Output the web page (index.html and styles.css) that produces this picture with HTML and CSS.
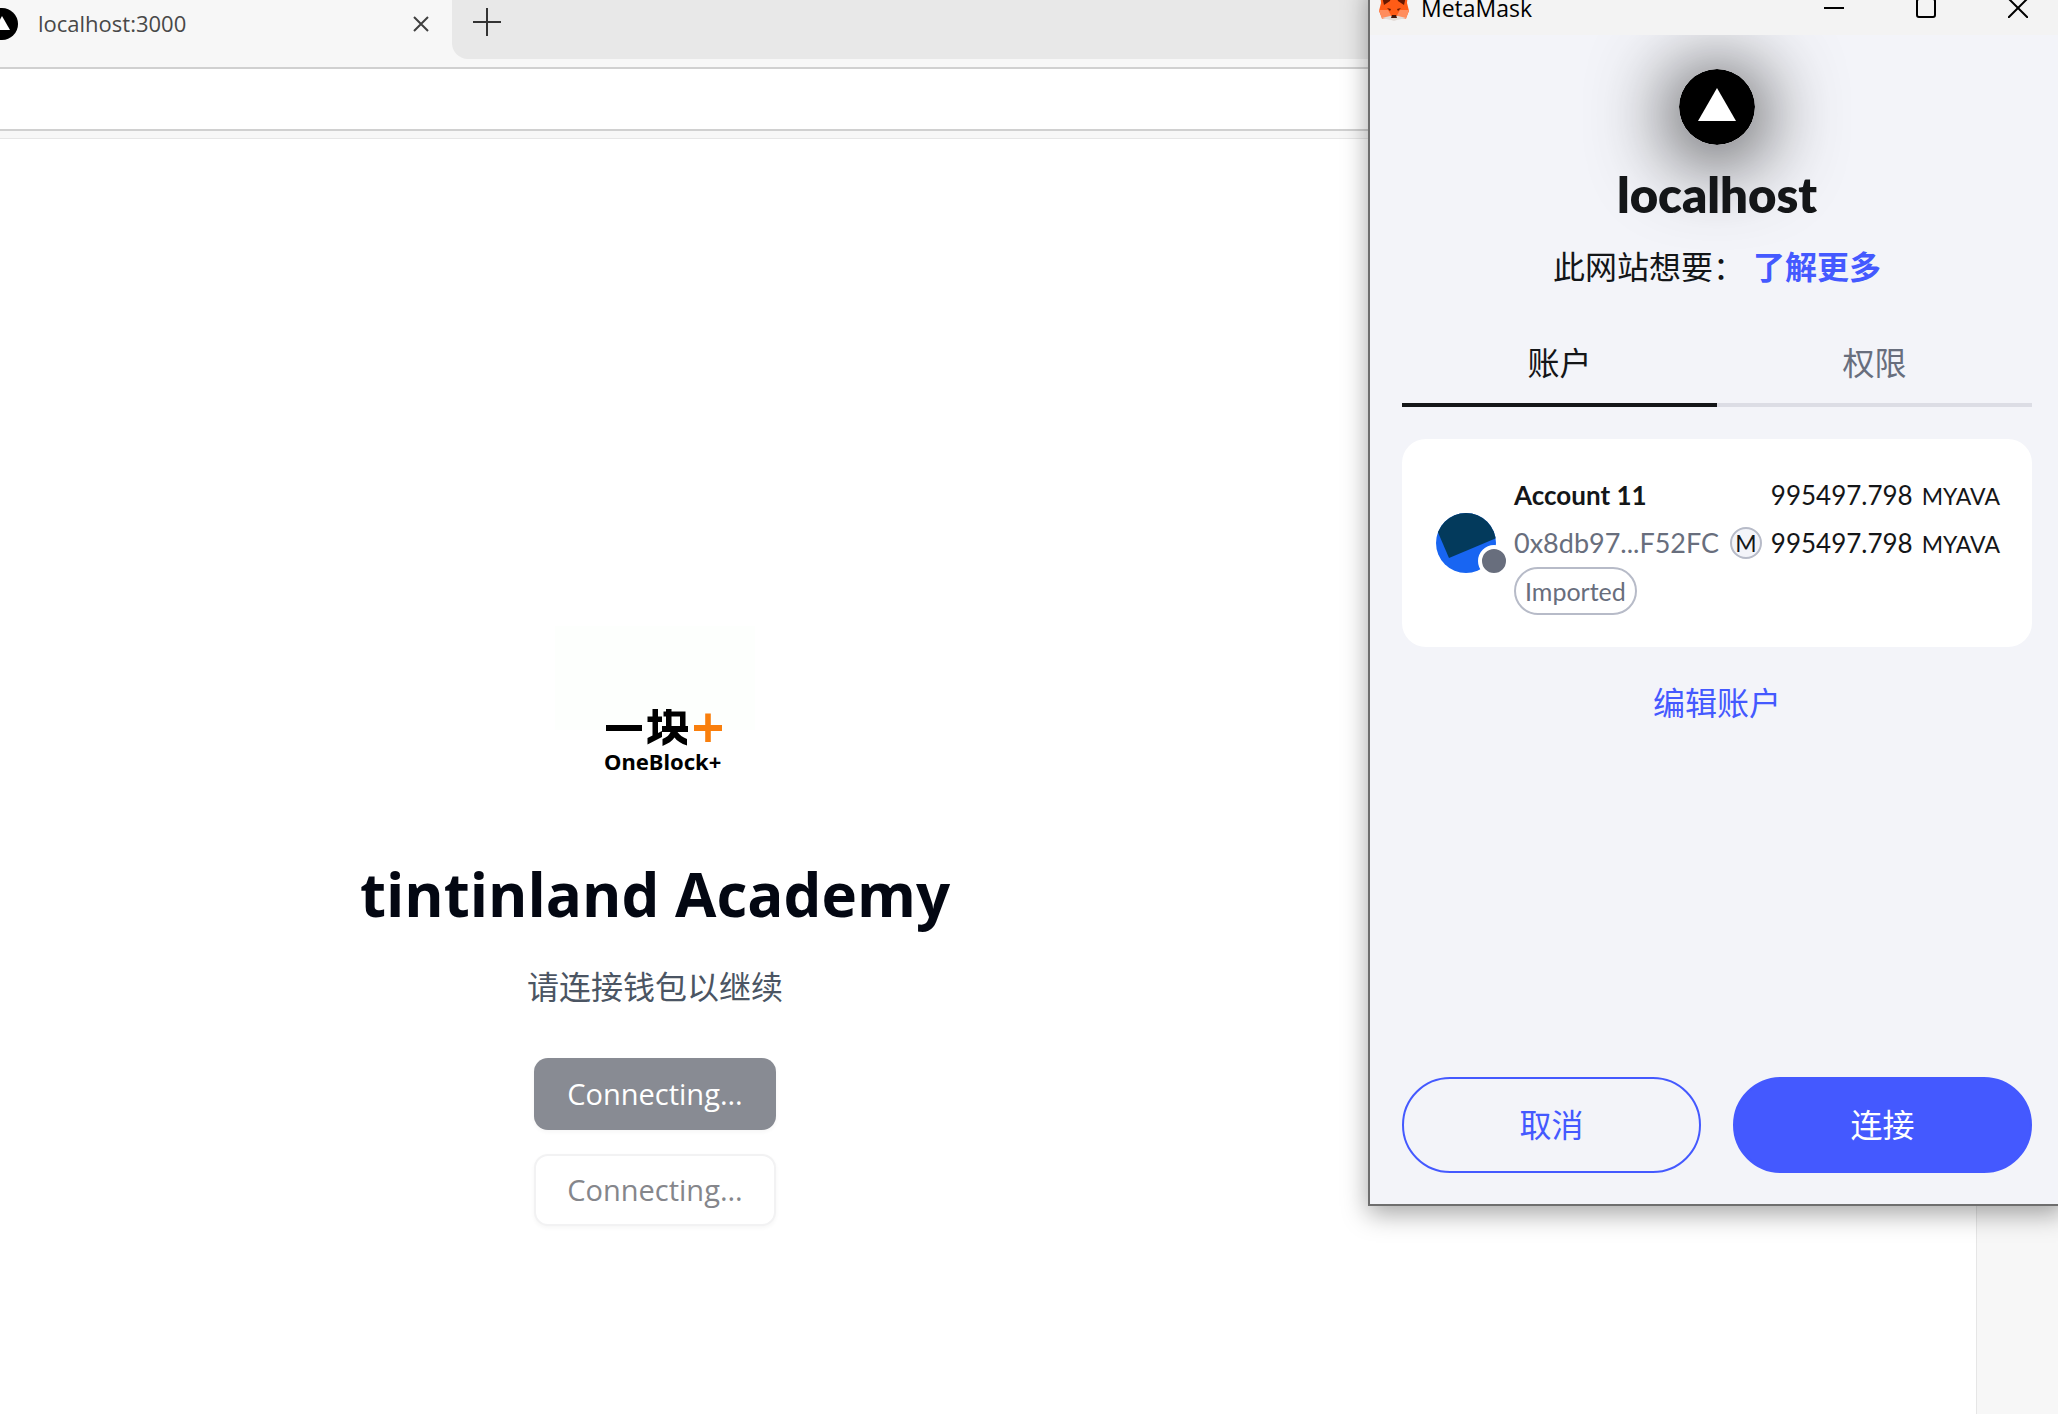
FILE: index.html
```html
<!DOCTYPE html>
<html lang="zh-CN">
<head>
<meta charset="utf-8">
<title>tintinland Academy</title>
<link rel="stylesheet" href="styles.css">
</head>
<body>
<div class="browser">
  <header class="tabstrip">
    <div class="tab">
      <svg class="tab-icon" viewBox="0 0 32 32" aria-hidden="true"><circle cx="16" cy="16" r="16"/><path d="M16 8l8 14H8z" fill="#fff"/></svg>
      <span class="tab-title">localhost:3000</span>
      <button class="icon-button" aria-label="Close tab"><svg width="16" height="16" viewBox="0 0 16 16"><path d="M1 1l14 14M15 1L1 15" stroke="#404040" stroke-width="2" fill="none"/></svg></button>
    </div>
    <div class="strip-rest">
      <button class="icon-button" aria-label="New tab"><svg width="28" height="28" viewBox="0 0 28 28"><path d="M14 0v28M0 14h28" stroke="#333" stroke-width="2" fill="none"/></svg></button>
    </div>
  </header>
  <div class="toolbar"></div>
  <div class="viewport">
    <main class="page">
      <div class="logo">
        <svg viewBox="0 0 200 200" role="img" aria-label="OneBlock+">
          <rect width="200" height="104" fill="#fdfffd"/>
          <path d="M51 99h36v6H51z"/>
          <path d="M97.500 83h5.500v7.500h4v5.500h-4v11l4-2v6l-14.500 7.500v-6.500l5-2.500V96h-5v-5.500h5z"/>
          <path d="M111 83h5.500v2.500h14V100h2.500v6h-10.500c2 3 5 5 9.500 7v6.500c-6-2-10-4.500-12.500-8-2.500 3.500-6 6-12 8.500V113c4.500-2 7-4 8-7H107v-6h4v-9.500h-2.500v-5H111zM116.500 90.500V100h8.500v-9.500z" fill-rule="evenodd"/>
          <path d="M139 99h11.200V87.500h5.600V99H167v6h-11.200v11h-5.600v-11H139z" fill="#f97f0d"/>
          <text x="49" y="144" class="logo-text">OneBlock+</text>
        </svg>
      </div>
      <h1 class="title">tintinland Academy</h1>
      <p class="subtitle">请连接钱包以继续</p>
      <div class="connectors">
        <button class="connect connect-solid" disabled>Connecting...</button>
        <button class="connect connect-outline" disabled>Connecting...</button>
      </div>
    </main>
    <aside class="sidebar"></aside>
  </div>
</div>

<section class="wallet" aria-label="MetaMask">
  <header class="titlebar">
    <svg class="fox" viewBox="0 0 30 30" aria-hidden="true">
      <path d="M1 1l10 6h8l10-6-1 11 2 8-3 7-8-1-4 3-4-3-8 1-3-7 2-8z" fill="#ff5c16"/>
      <path d="M2 1l3 13 6-4 1-3zM28 1l-3 13-6-4-1-3z" fill="#661800"/>
      <path d="M0 19h9l4 7-10 2zM30 19h-9l-4 7 10 2z" fill="#ff8d5d"/>
      <path d="M3 27l8-2h8l8 2-9 2-3 1-3-1z" fill="#e3dcd8"/>
      <path d="M13 24h4l1 3h-6z" fill="#42180c"/>
      <path d="M8 17l4 1-1 2zM22 17l-4 1 1 2z" fill="#661800"/>
    </svg>
    <span class="titlebar-name">MetaMask</span>
    <div class="window-controls">
      <button class="icon-button" aria-label="Minimize"><svg width="20" height="20" viewBox="0 0 20 20"><path d="M0 10h20" stroke="#000" stroke-width="2"/></svg></button>
      <button class="icon-button" aria-label="Maximize"><svg width="20" height="20" viewBox="0 0 20 20"><rect x="1" y="1" width="18" height="18" rx="2" fill="none" stroke="#000" stroke-width="2"/></svg></button>
      <button class="icon-button" aria-label="Close"><svg width="20" height="20" viewBox="0 0 20 20"><path d="M0 0l20 20M20 0L0 20" stroke="#000" stroke-width="2"/></svg></button>
    </div>
  </header>
  <div class="wallet-body">
    <svg class="site-icon" viewBox="0 0 76 76" aria-hidden="true"><circle cx="38" cy="38" r="38"/><path d="M38 19l19 33H19z" fill="#fff"/></svg>
    <h2 class="site-name">localhost</h2>
    <p class="site-ask">此网站想要：<a class="link strong" href="#more">了解更多</a></p>
    <div class="tabs" role="tablist">
      <button class="tabs-item active" role="tab" aria-selected="true">账户</button>
      <button class="tabs-item" role="tab" aria-selected="false">权限</button>
    </div>
    <div class="card">
      <div class="avatar">
        <svg viewBox="0 0 60 60" aria-hidden="true"><defs><clipPath id="round"><circle cx="30" cy="30" r="30"/></clipPath></defs><g clip-path="url(#round)"><path d="M0 0h60v60H0z" fill="#1865f2"/><path d="M-8 -4L13 45 70 21V-10z" fill="#033a5c"/></g></svg>
        <span class="avatar-badge"></span>
      </div>
      <div class="account">
        <span class="account-name">Account 11</span>
        <span class="account-address">0x8db97...F52FC</span>
        <span class="account-tag">Imported</span>
      </div>
      <div class="balances">
        <span class="balance">995497.798 <small>MYAVA</small></span>
        <span class="balance"><i class="token">M</i>995497.798 <small>MYAVA</small></span>
      </div>
    </div>
    <a class="link edit" href="#edit">编辑账户</a>
    <footer class="actions">
      <button class="action action-outline">取消</button>
      <button class="action action-solid">连接</button>
    </footer>
  </div>
</section>
</body>
</html>
```
FILE: styles.css
```css
* {
  box-sizing: border-box;
}

body {
  position: relative;
  margin: 0;
  min-height: 100vh;
  overflow: hidden;
  background: #fff;
  color: #141618;
  font-family: "Open Sans", "Noto Sans CJK SC", sans-serif;
}

button {
  font: inherit;
  color: inherit;
}

svg {
  display: block;
}

.icon-button {
  display: flex;
  padding: 0;
  border: 0;
  background: none;
}

/* Browser chrome */
.browser {
  display: flex;
  flex-direction: column;
  min-height: 100vh;
}

.tabstrip {
  display: flex;
  height: 67px;
  padding-bottom: 8px;
  background: #f7f7f7;
}

.tab {
  display: flex;
  align-items: center;
  width: 452px;
  padding: 0 23px 12px 0;
}

.tab-icon {
  width: 32px;
  height: 32px;
  margin-left: -14px;
}

.tab-title {
  flex: 1;
  margin-left: 20px;
  padding-bottom: 2px;
  color: #484848;
  font-size: 22px;
}

.strip-rest {
  display: flex;
  flex: 1;
  padding: 8px 21px;
  border-bottom-left-radius: 16px;
  background: #e8e8e8;
}

.toolbar {
  height: 64px;
  border: solid #d0d0d0;
  border-width: 2px 0;
  background: #fff;
}

.viewport {
  display: flex;
  flex: 1;
  padding-top: 7px;
  background: #f7f7f7;
}

.page {
  display: flex;
  flex: 1;
  flex-direction: column;
  align-items: center;
  padding: 487px 666px 0 0;
  border: solid #e6e6e6;
  border-width: 1px 1px 0 0;
  background: #fff;
}

.sidebar {
  width: 81px;
}

/* Landing page */
.logo {
  width: 200px;
  height: 200px;
}

.logo-text {
  font: 700 22px "Noto Sans", sans-serif;
}

.title {
  margin: 24px 0 0;
  color: #030712;
  font-size: 60px;
  font-weight: 700;
  line-height: 88px;
  white-space: nowrap;
}

.subtitle {
  margin: 25px 0 0;
  color: #4b5563;
  font-size: 32px;
  line-height: 48px;
}

.connectors {
  display: flex;
  flex-direction: column;
  gap: 24px;
  margin-top: 47px;
}

.connect {
  width: 242px;
  height: 72px;
  padding: 0 0 2px;
  border: 0;
  border-radius: 14px;
  box-shadow: 0 2px 4px rgba(0, 0, 0, 0.04);
  font-size: 29px;
}

.connect-solid {
  background: #888b93;
  color: #fff;
}

.connect-outline {
  border: 2px solid #f2f2f3;
  background: #fff;
  color: #85868b;
}

/* Wallet window */
.wallet {
  position: absolute;
  top: -19px;
  right: -6px;
  width: 696px;
  border: 2px solid #6e6e6e;
  box-shadow: 0 8px 24px rgba(0, 0, 0, 0.35);
  background: #f3f4f9;
}

.titlebar {
  display: flex;
  align-items: center;
  height: 52px;
  padding: 0 34px 2px 9px;
  background: #f3f3f3;
}

.fox {
  width: 30px;
  height: 30px;
  margin-bottom: 4px;
}

.titlebar-name {
  flex: 1;
  margin-left: 12px;
  color: #000;
  font-size: 23px;
  line-height: 28px;
}

.window-controls {
  display: flex;
  gap: 72px;
}

.wallet-body {
  display: flex;
  flex-direction: column;
  align-items: center;
  padding: 34px 30px 31px 32px;
  overflow: hidden;
  font-family: Lato, "Noto Sans CJK SC", sans-serif;
  font-size: 32px;
  line-height: 48px;
}

.site-icon {
  width: 76px;
  height: 76px;
  border-radius: 50%;
  box-shadow: 0 8px 80px 8px rgba(0, 0, 0, 0.8);
}

.site-name {
  position: relative;
  margin: 21px 0 0;
  font-size: 49px;
  font-weight: 800;
  line-height: 56px;
}

.site-ask {
  margin: 21px 0 0;
}

.link {
  color: #4459ff;
  text-decoration: none;
}

.strong {
  margin-left: 8px;
  font-weight: 700;
}

.tabs {
  display: flex;
  width: 100%;
  margin-top: 32px;
}

.tabs-item {
  flex: 1;
  height: 84px;
  padding: 0;
  border: 0;
  border-bottom: 4px solid #dcdde5;
  background: none;
  color: #686e7d;
}

.tabs-item.active {
  border-color: #141618;
  color: #141618;
}

.card {
  display: flex;
  align-items: center;
  width: 100%;
  height: 208px;
  margin-top: 32px;
  padding: 32px;
  border-radius: 24px;
  background: #fff;
  font-size: 26px;
}

.avatar {
  position: relative;
  flex: none;
  width: 60px;
  margin-left: 2px;
}

.avatar-badge {
  position: absolute;
  right: -14px;
  bottom: -4px;
  width: 32px;
  height: 32px;
  border: 4px solid #fff;
  border-radius: 50%;
  background: #686e7d;
}

.account {
  display: flex;
  flex: 1;
  flex-direction: column;
  align-items: flex-start;
  margin-left: 18px;
}

.account-name {
  font-weight: 700;
}

.account-address {
  color: #686e7d;
  font-size: 27px;
}

.account-tag {
  padding: 0 9px;
  border: 2px solid #b7bbc8;
  border-radius: 24px;
  color: #686e7d;
  font-size: 25px;
  line-height: 44px;
}

.balances {
  display: flex;
  flex-direction: column;
  align-self: flex-start;
  align-items: flex-end;
}

.balance {
  display: flex;
  align-items: baseline;
  gap: 9px;
  height: 48px;
}

.balance small {
  font-size: 23px;
}

.token {
  align-self: center;
  width: 32px;
  height: 32px;
  border: 2px solid #b7bbc8;
  border-radius: 50%;
  background: #f3f4f9;
  font-size: 23px;
  font-style: normal;
  line-height: 28px;
  text-align: center;
}

.edit {
  margin-top: 32px;
}

.actions {
  display: flex;
  gap: 32px;
  width: 100%;
  margin-top: 350px;
}

.action {
  flex: 1;
  height: 96px;
  border: 2px solid #4459ff;
  border-radius: 48px;
  background: none;
  color: #4459ff;
}

.action-solid {
  background: #4459ff;
  color: #fff;
}
```
